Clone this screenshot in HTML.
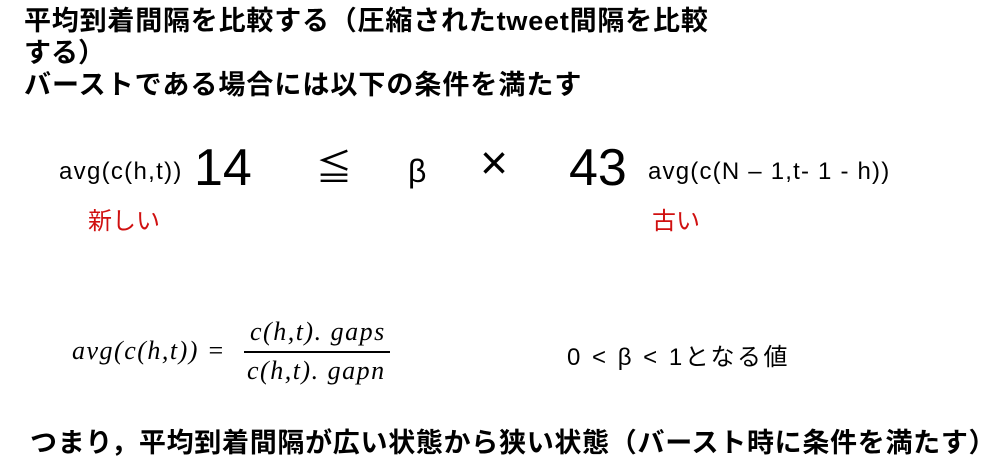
<!DOCTYPE html>
<html><head><meta charset="utf-8"><style>
body{margin:0;width:1008px;height:469px;background:#fff;position:relative;overflow:hidden;font-family:"Liberation Sans","Noto Sans CJK JP",sans-serif;color:#000}
.a{position:absolute;white-space:nowrap;line-height:1}
.b{font-weight:bold;font-size:27px}
.r{color:#d01010;font-size:24px}
.m{font-family:"Liberation Serif",serif;font-style:italic;font-size:26px}
</style></head><body>
<div class="a b" style="left:24px;top:8px;letter-spacing:0.8px">平均到着間隔を比較する（圧縮されたtweet間隔を比較</div>
<div class="a b" style="left:24px;top:40px">する）</div>
<div class="a b" style="left:24px;top:72px;letter-spacing:1px">バーストである場合には以下の条件を満たす</div>

<div class="a" style="left:59px;top:160px;font-size:24px;letter-spacing:1.3px">avg(c(h,t))</div>
<div class="a" style="left:194px;top:142px;font-size:52px">14</div>
<div class="a" style="left:316px;top:150px;font-size:36px">≦</div>
<div class="a" style="left:408px;top:155px;font-size:32px">β</div>
<div class="a" style="left:480px;top:140px;font-size:48px">×</div>
<div class="a" style="left:569px;top:142px;font-size:52px">43</div>
<div class="a" style="left:648px;top:160px;font-size:24px;letter-spacing:1.2px">avg(c(N – 1,t- 1 - h))</div>

<div class="a r" style="left:88px;top:210px">新しい</div>
<div class="a r" style="left:652px;top:210px">古い</div>

<div class="a m" style="left:72px;top:338px;letter-spacing:1.5px">avg(c(h,t)) =</div>
<div class="a m" style="left:250px;top:319px;letter-spacing:1.5px">c(h,t). gaps</div>
<div style="position:absolute;left:244px;top:351px;width:146px;height:2px;background:#000"></div>
<div class="a m" style="left:247px;top:358px;letter-spacing:1.5px">c(h,t). gapn</div>
<div class="a" style="left:567px;top:346px;font-size:24px;letter-spacing:2.5px">0 &lt; β &lt; 1となる値</div>

<div class="a b" style="left:30px;top:430px;letter-spacing:0.7px">つまり，平均到着間隔が広い状態から狭い状態（バースト時に条件を満たす）</div>
</body></html>
